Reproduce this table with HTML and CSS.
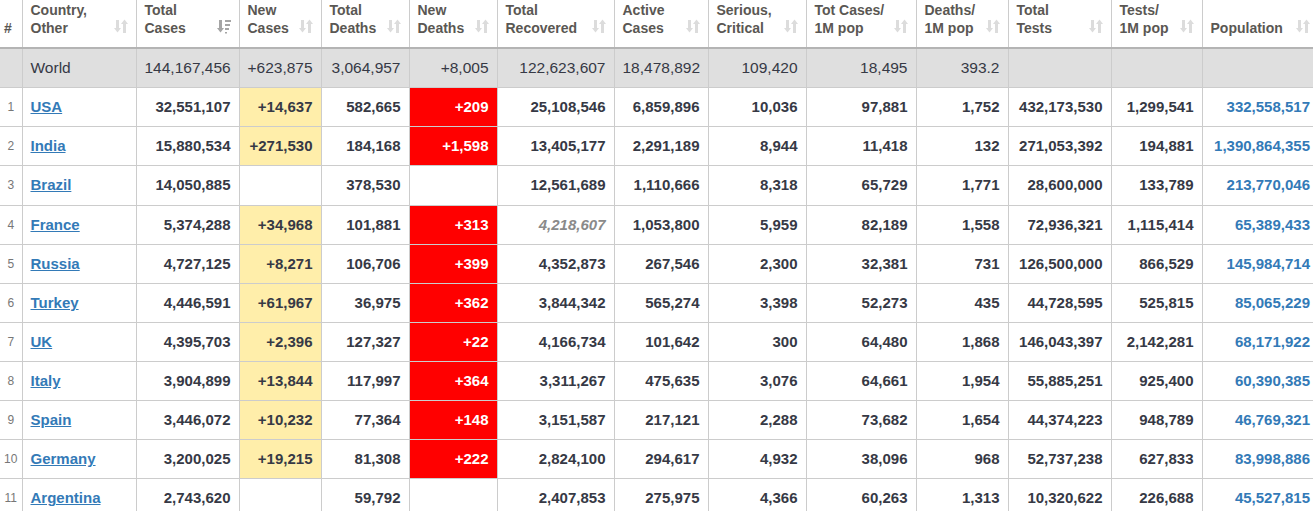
FILE: index.html
```html
<!DOCTYPE html>
<html lang="en">
<head>
<meta charset="utf-8">
<title>Coronavirus Cases</title>
<link rel="stylesheet" href="styles.css">
</head>
<body>
<svg class="defs" width="0" height="0" aria-hidden="true">
  <defs>
    <g id="sort">
      <rect x="2" y="1" width="3" height="9"/>
      <polygon points="0,9 7,9 3.5,13.5"/>
      <rect x="9" y="4" width="3" height="10"/>
      <polygon points="7,5 14,5 10.5,0.5"/>
    </g>
    <g id="sorted">
      <rect x="2" y="1" width="3" height="9"/>
      <polygon points="0,9 7,9 3.5,13.5"/>
      <rect x="8" y="1" width="6" height="2"/>
      <rect x="8" y="5" width="5" height="2"/>
      <rect x="8" y="9" width="4" height="2"/>
      <rect x="8" y="13" width="2" height="1.5"/>
    </g>
  </defs>
</svg>
<table class="covid">
  <colgroup>
    <col class="c-rank"><col class="c-country"><col class="c-tc"><col class="c-nc"><col class="c-td"><col class="c-nd"><col class="c-tr"><col class="c-ac"><col class="c-sc"><col class="c-cpm"><col class="c-dpm"><col class="c-tt"><col class="c-tpm"><col class="c-pop">
  </colgroup>
  <thead>
    <tr>
      <th><div class="th-in"><span>#</span></div></th>
      <th><div class="th-in"><span>Country,<br>Other</span><svg class="si" viewBox="0 0 14 15"><use href="#sort"/></svg></div></th>
      <th><div class="th-in"><span>Total<br>Cases</span><svg class="si on" viewBox="0 0 14 15"><use href="#sorted"/></svg></div></th>
      <th><div class="th-in"><span>New<br>Cases</span><svg class="si" viewBox="0 0 14 15"><use href="#sort"/></svg></div></th>
      <th><div class="th-in"><span>Total<br>Deaths</span><svg class="si" viewBox="0 0 14 15"><use href="#sort"/></svg></div></th>
      <th><div class="th-in"><span>New<br>Deaths</span><svg class="si" viewBox="0 0 14 15"><use href="#sort"/></svg></div></th>
      <th><div class="th-in"><span>Total<br>Recovered</span><svg class="si" viewBox="0 0 14 15"><use href="#sort"/></svg></div></th>
      <th><div class="th-in"><span>Active<br>Cases</span><svg class="si" viewBox="0 0 14 15"><use href="#sort"/></svg></div></th>
      <th><div class="th-in"><span>Serious,<br>Critical</span><svg class="si" viewBox="0 0 14 15"><use href="#sort"/></svg></div></th>
      <th><div class="th-in"><span>Tot&nbsp;Cases/<br>1M pop</span><svg class="si" viewBox="0 0 14 15"><use href="#sort"/></svg></div></th>
      <th><div class="th-in"><span>Deaths/<br>1M pop</span><svg class="si" viewBox="0 0 14 15"><use href="#sort"/></svg></div></th>
      <th><div class="th-in"><span>Total<br>Tests</span><svg class="si" viewBox="0 0 14 15"><use href="#sort"/></svg></div></th>
      <th><div class="th-in"><span>Tests/<br>1M pop</span><svg class="si" viewBox="0 0 14 15"><use href="#sort"/></svg></div></th>
      <th><div class="th-in"><span>Population</span><svg class="si" viewBox="0 0 14 15"><use href="#sort"/></svg></div></th>
    </tr>
  </thead>
  <tbody>
    <tr class="world">
      <td></td><td class="name">World</td><td>144,167,456</td><td>+623,875</td><td>3,064,957</td><td>+8,005</td><td>122,623,607</td><td>18,478,892</td><td>109,420</td><td>18,495</td><td>393.2</td><td></td><td></td><td></td>
    </tr>
    <tr>
      <td class="rank">1</td><td class="name"><a href="#">USA</a></td><td>32,551,107</td><td class="nc">+14,637</td><td>582,665</td><td class="nd">+209</td><td>25,108,546</td><td>6,859,896</td><td>10,036</td><td>97,881</td><td>1,752</td><td>432,173,530</td><td>1,299,541</td><td class="pop">332,558,517</td>
    </tr>
    <tr>
      <td class="rank">2</td><td class="name"><a href="#">India</a></td><td>15,880,534</td><td class="nc">+271,530</td><td>184,168</td><td class="nd">+1,598</td><td>13,405,177</td><td>2,291,189</td><td>8,944</td><td>11,418</td><td>132</td><td>271,053,392</td><td>194,881</td><td class="pop">1,390,864,355</td>
    </tr>
    <tr>
      <td class="rank">3</td><td class="name"><a href="#">Brazil</a></td><td>14,050,885</td><td></td><td>378,530</td><td></td><td>12,561,689</td><td>1,110,666</td><td>8,318</td><td>65,729</td><td>1,771</td><td>28,600,000</td><td>133,789</td><td class="pop">213,770,046</td>
    </tr>
    <tr>
      <td class="rank">4</td><td class="name"><a href="#">France</a></td><td>5,374,288</td><td class="nc">+34,968</td><td>101,881</td><td class="nd">+313</td><td class="est">4,218,607</td><td>1,053,800</td><td>5,959</td><td>82,189</td><td>1,558</td><td>72,936,321</td><td>1,115,414</td><td class="pop">65,389,433</td>
    </tr>
    <tr>
      <td class="rank">5</td><td class="name"><a href="#">Russia</a></td><td>4,727,125</td><td class="nc">+8,271</td><td>106,706</td><td class="nd">+399</td><td>4,352,873</td><td>267,546</td><td>2,300</td><td>32,381</td><td>731</td><td>126,500,000</td><td>866,529</td><td class="pop">145,984,714</td>
    </tr>
    <tr>
      <td class="rank">6</td><td class="name"><a href="#">Turkey</a></td><td>4,446,591</td><td class="nc">+61,967</td><td>36,975</td><td class="nd">+362</td><td>3,844,342</td><td>565,274</td><td>3,398</td><td>52,273</td><td>435</td><td>44,728,595</td><td>525,815</td><td class="pop">85,065,229</td>
    </tr>
    <tr>
      <td class="rank">7</td><td class="name"><a href="#">UK</a></td><td>4,395,703</td><td class="nc">+2,396</td><td>127,327</td><td class="nd">+22</td><td>4,166,734</td><td>101,642</td><td>300</td><td>64,480</td><td>1,868</td><td>146,043,397</td><td>2,142,281</td><td class="pop">68,171,922</td>
    </tr>
    <tr>
      <td class="rank">8</td><td class="name"><a href="#">Italy</a></td><td>3,904,899</td><td class="nc">+13,844</td><td>117,997</td><td class="nd">+364</td><td>3,311,267</td><td>475,635</td><td>3,076</td><td>64,661</td><td>1,954</td><td>55,885,251</td><td>925,400</td><td class="pop">60,390,385</td>
    </tr>
    <tr>
      <td class="rank">9</td><td class="name"><a href="#">Spain</a></td><td>3,446,072</td><td class="nc">+10,232</td><td>77,364</td><td class="nd">+148</td><td>3,151,587</td><td>217,121</td><td>2,288</td><td>73,682</td><td>1,654</td><td>44,374,223</td><td>948,789</td><td class="pop">46,769,321</td>
    </tr>
    <tr>
      <td class="rank">10</td><td class="name"><a href="#">Germany</a></td><td>3,200,025</td><td class="nc">+19,215</td><td>81,308</td><td class="nd">+222</td><td>2,824,100</td><td>294,617</td><td>4,932</td><td>38,096</td><td>968</td><td>52,737,238</td><td>627,833</td><td class="pop">83,998,886</td>
    </tr>
    <tr>
      <td class="rank">11</td><td class="name"><a href="#">Argentina</a></td><td>2,743,620</td><td></td><td>59,792</td><td></td><td>2,407,853</td><td>275,975</td><td>4,366</td><td>60,263</td><td>1,313</td><td>10,320,622</td><td>226,688</td><td class="pop">45,527,815</td>
    </tr>
  </tbody>
</table>
</body>
</html>
```
FILE: styles.css
```css
html, body {
  margin: 0;
  padding: 0;
  overflow: hidden;
  background: #fff;
}

body {
  font-family: "Liberation Sans", Arial, Helvetica, sans-serif;
  color: #363945;
}

.defs {
  position: absolute;
  width: 0;
  height: 0;
}

.covid {
  border-collapse: collapse;
  table-layout: fixed;
  width: 1318px;
}

.c-rank { width: 22px; }
.c-country { width: 114px; }
.c-tc { width: 103px; }
.c-nc { width: 82px; }
.c-td { width: 88px; }
.c-nd { width: 88px; }
.c-tr { width: 117px; }
.c-ac { width: 94px; }
.c-sc { width: 98px; }
.c-cpm { width: 110px; }
.c-dpm { width: 92px; }
.c-tt { width: 103px; }
.c-tpm { width: 91px; }
.c-pop { width: 116px; }

.covid th {
  height: 36px;
  padding: 1px 8px 10px 8px;
  vertical-align: bottom;
  text-align: left;
  font-size: 14px;
  font-weight: bold;
  line-height: 18px;
  color: #5a5753;
  border-left: 1px solid #ccc;
  border-bottom: 2px solid #b4b4b4;
}

.covid th:first-child {
  border-left: none;
  padding: 1px 0 10px 4px;
}

.th-in {
  display: flex;
  justify-content: space-between;
  align-items: flex-end;
}

.si {
  width: 14px;
  height: 15px;
  flex: none;
  margin-bottom: 3px;
  fill: #dcdcdc;
}

.si.on {
  fill: #a5a5a5;
}

.covid td {
  height: 38.14px;
  padding: 0 8px;
  text-align: right;
  font-size: 15px;
  font-weight: bold;
  line-height: 18px;
  color: #363945;
  border-left: 1px solid #ccc;
  border-bottom: 1px solid #ccc;
  white-space: nowrap;
}

.covid td:first-child {
  border-left: none;
}

.covid td.name {
  text-align: left;
}

.covid td.name a {
  color: #337ab7;
  text-decoration: underline;
}

.covid td.rank {
  padding: 0;
  text-align: center;
  font-size: 12px;
  font-weight: normal;
  color: #777;
}

.covid tr.world td {
  background: #dfdfdf;
  font-weight: normal;
  font-size: 15.5px;
  color: #363945;
}

.covid td.nc {
  background: #ffeeaa;
}

.covid td.nd {
  background: #ff0000;
  color: #fff;
}

.covid td.pop {
  color: #337ab7;
}

.covid td.est {
  font-style: italic;
  color: #8a8a8a;
}
```
